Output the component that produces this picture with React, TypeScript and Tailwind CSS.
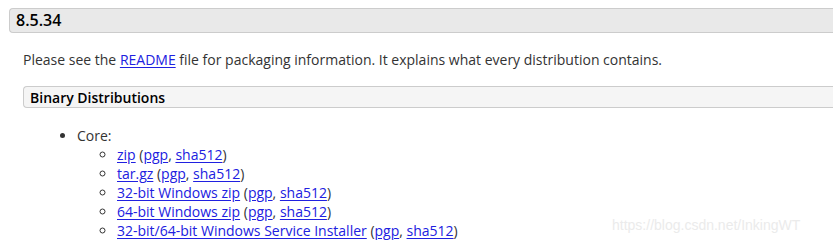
const links = [
  { label: 'zip' },
  { label: 'tar.gz' },
  { label: '32-bit Windows zip' },
  { label: '64-bit Windows zip' },
  { label: '32-bit/64-bit Windows Service Installer' },
];

function Link({ children }: { children: React.ReactNode }) {
  return <a href="#" className="text-[#2020e0] underline underline-offset-2">{children}</a>;
}

export default function App() {
  return (
    <div className="relative h-[244px] w-[833px] overflow-hidden bg-white font-['Open_Sans',sans-serif] text-[14px] leading-[19px] text-[#333]">
      <div className="pl-[9px] pt-[8px]">
        <h3 className="flex h-[25px] items-center rounded-l-[4px] border border-r-0 border-[#ccc] bg-[#e9e9e9] pl-[6px] text-[16px] font-semibold text-black">
          8.5.34
        </h3>
        <div className="pl-[14px]">
          <p className="mt-[17px]">
            Please see the <Link>README</Link> file for packaging information. It explains what every distribution
            contains.
          </p>
          <h4 className="mt-[17px] flex h-[22px] items-center rounded-l-[4px] border border-r-0 border-[#ccc] bg-[#f5f5f5] pl-[6px] text-[14px] font-semibold text-black">
            Binary Distributions
          </h4>
          <ul className="mt-[18px] list-disc pl-[54px]">
            <li>
              Core:
              <ul className="list-[circle] pl-[40px]">
                {links.map((l) => (
                  <li key={l.label}>
                    <Link>{l.label}</Link> (<Link>pgp</Link>, <Link>sha512</Link>)
                  </li>
                ))}
              </ul>
            </li>
          </ul>
        </div>
      </div>
      <div className="absolute left-[612px] top-[216px] font-['Liberation_Sans',sans-serif] text-[14px] text-[#ebebeb]">
        https://blog.csdn.net/InkingWT
      </div>
    </div>
  );
}
